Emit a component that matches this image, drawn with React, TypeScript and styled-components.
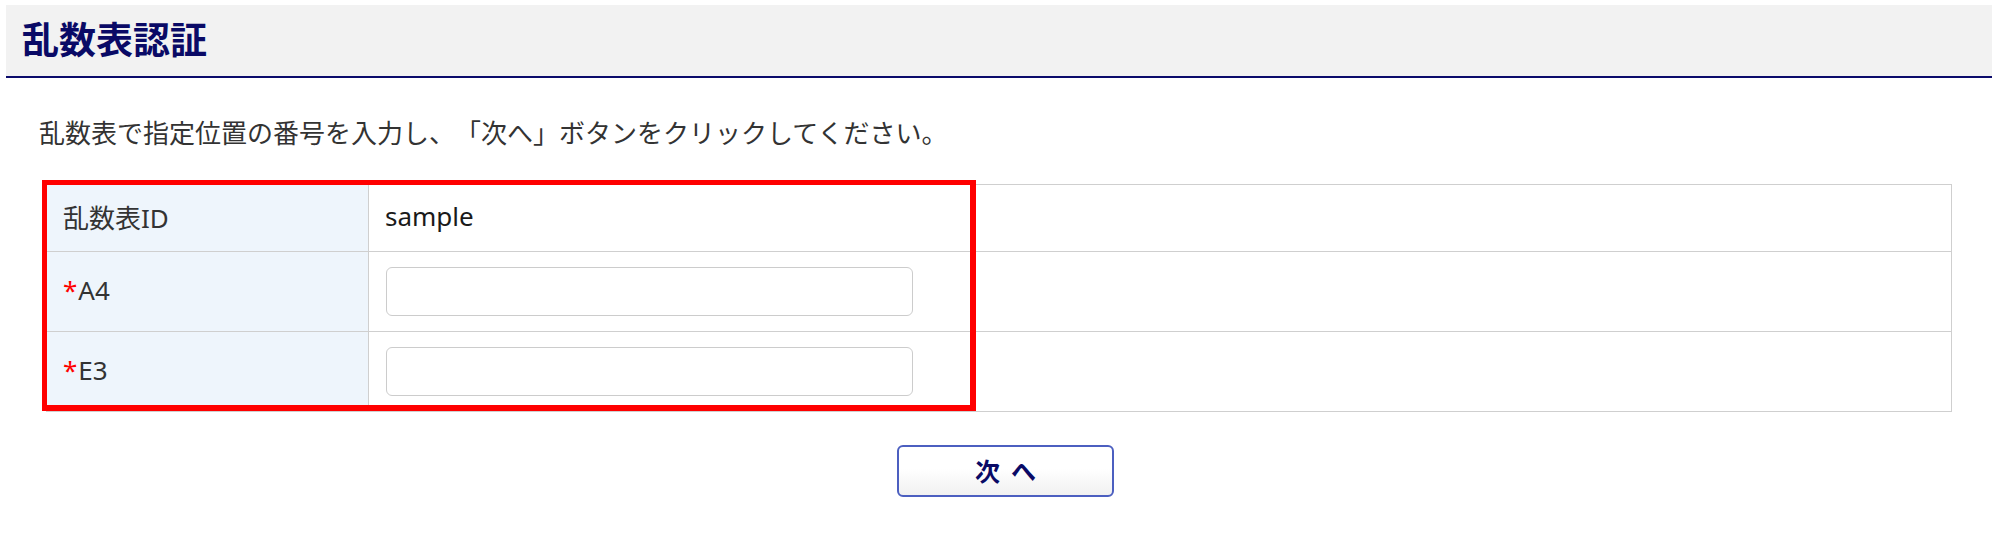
import React from "react";
import styled, { createGlobalStyle } from "styled-components";

const GlobalStyle = createGlobalStyle`
  html, body {
    margin: 0;
    padding: 0;
    background: #ffffff;
  }
  body {
    font-family: "Noto Sans", "Noto Sans CJK JP", sans-serif;
    color: #333333;
    text-spacing-trim: space-all;
  }
`;

const Page = styled.div`
  padding: 5px 6px 0 6px;
  width: 1998px;
  box-sizing: border-box;
`;

const Header = styled.header`
  background: #f2f2f2;
  border-bottom: 2px solid #0b0b6b;
  display: flex;
  align-items: center;
  padding: 0 0 6px 16px;
  box-sizing: content-box;
  height: 65px;
`;

const Title = styled.h1`
  margin: 0;
  font-size: 37px;
  line-height: 44px;
  font-weight: 700;
  color: #0a0a66;
  font-family: "Noto Sans CJK JP", sans-serif;
`;

const Lead = styled.p`
  margin: 34px 0 0 0;
  padding-left: 33px;
  font-size: 26px;
  line-height: 40px;
  color: #333333;
  font-family: "Noto Sans CJK JP", sans-serif;
  text-spacing-trim: space-all;
`;

const TableWrap = styled.div`
  position: relative;
  margin: 32px 40px 0 40px;
`;

const Grid = styled.div`
  display: grid;
  grid-template-columns: 322px 1fr;
  border: 1px solid #cfcfcf;
  border-bottom: none;
`;

const Label = styled.div<{ $h: number }>`
  height: ${(p) => p.$h}px;
  box-sizing: border-box;
  background: #eef5fc;
  border-right: 1px solid #cfcfcf;
  border-bottom: 1px solid #cfcfcf;
  display: flex;
  align-items: center;
  padding: 0 0 3px 16px;
  font-size: 26px;
  color: #333333;
`;

const Value = styled.div<{ $h: number }>`
  height: ${(p) => p.$h}px;
  box-sizing: border-box;
  border-bottom: 1px solid #cfcfcf;
  display: flex;
  align-items: center;
  padding: 0 0 0 16px;
  font-size: 26px;
  color: #1a1a1a;
`;

const ValueText = styled.span`
  padding-bottom: 4px;
`;

const Req = styled.span`
  color: #ff0000;
  margin-right: 1px;
`;

const Input = styled.input`
  width: 527px;
  height: 49px;
  box-sizing: border-box;
  margin-left: 1px;
  border: 1px solid #cccccc;
  border-radius: 6px;
  background: #ffffff;
  font-size: 24px;
  padding: 0 12px;
  outline: none;
  font-family: "Noto Sans", "Noto Sans CJK JP", sans-serif;
`;

const Highlight = styled.div`
  position: absolute;
  left: -4px;
  top: -4px;
  width: 934px;
  height: 231px;
  box-sizing: border-box;
  border-style: solid;
  border-color: #ff0000;
  border-width: 5px 6px 6px 5px;
  pointer-events: none;
`;

const Actions = styled.div`
  display: flex;
  justify-content: center;
  padding-left: 13px;
  margin-top: 33px;
`;

const NextButton = styled.button`
  width: 217px;
  height: 52px;
  border: 2px solid #4c5fc0;
  border-radius: 6px;
  background: linear-gradient(#ffffff 0%, #ffffff 45%, #f1f1f1 100%);
  color: #0a0a66;
  font-family: "Noto Sans CJK JP", sans-serif;
  font-weight: 700;
  font-size: 25px;
  cursor: pointer;
  display: flex;
  align-items: center;
  justify-content: center;
  gap: 11px;
  padding: 0 0 2px 0;
`;

export default function App() {
  return (
    <>
      <GlobalStyle />
      <Page>
        <Header>
          <Title>乱数表認証</Title>
        </Header>
        <Lead>乱数表で指定位置の番号を入力し、「次へ」ボタンをクリックしてください。</Lead>
        <TableWrap>
          <Grid>
            <Label $h={67}>乱数表ID</Label>
            <Value $h={67}>
              <ValueText>sample</ValueText>
            </Value>
            <Label $h={80}>
              <Req>*</Req>A4
            </Label>
            <Value $h={80}>
              <Input type="text" />
            </Value>
            <Label $h={80}>
              <Req>*</Req>E3
            </Label>
            <Value $h={80}>
              <Input type="text" />
            </Value>
          </Grid>
          <Highlight />
        </TableWrap>
        <Actions>
          <NextButton type="button">
            <span>次</span>
            <span>へ</span>
          </NextButton>
        </Actions>
      </Page>
    </>
  );
}
